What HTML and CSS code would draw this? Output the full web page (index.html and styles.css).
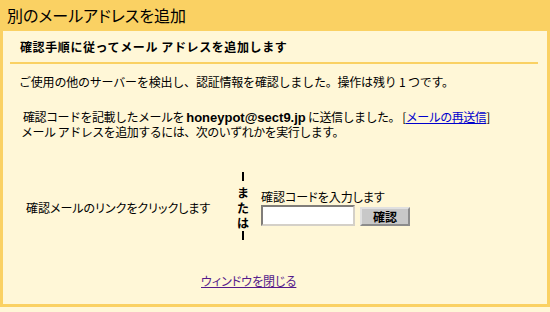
FILE: index.html
```html
<!DOCTYPE html>
<html lang="ja">

<head>
    <meta charset="UTF-8">
    <title>別のメールアドレスを追加</title>
    <link rel="stylesheet" href="styles.css">
</head>

<body>
    <div class="box">
        <div class="title">別のメールアドレスを追加</div>
        <div class="content">
            <div class="subtitle">確認手順に従ってメール アドレスを追加します</div>
            <p class="note">ご使用の他のサーバーを検出し、認証情報を確認しました。操作は残り 1 つです。</p>
            <p class="sent">
                確認コードを記載したメールを <b class="addr">honeypot@sect9.jp</b> に送信しました。 [<a href="#" class="resend">メールの再送信</a>]<br>
                メール アドレスを追加するには、次のいずれかを実行します。
            </p>
            <div class="choices">
                <div class="choice-link">確認メールのリンクをクリックします</div>
                <div class="or">
                    <span class="bar"></span>
                    <span>ま</span>
                    <span>た</span>
                    <span>は</span>
                    <span class="bar"></span>
                </div>
                <div class="choice-code">
                    <div class="code-label">確認コードを入力します</div>
                    <div class="code-row">
                        <input type="text" class="code-input">
                        <button class="code-btn">確認</button>
                    </div>
                </div>
            </div>
            <div class="close-row">
                <a href="#" class="close-link">ウィンドウを閉じる</a>
            </div>
        </div>
    </div>
</body>

</html>
```

FILE: styles.css
```css
body {
    margin: 0;
    background: #fff7d7;
    font-family: "Noto Sans CJK JP", "Liberation Sans", sans-serif;
    font-size: 12px;
    color: #000;
}

.box {
    width: 550px;
    height: 307px;
    box-sizing: border-box;
    border: 3px solid #fad163;
    border-top: none;
}

.title {
    height: 31px;
    line-height: 31px;
    margin: 0 -3px;
    padding-left: 7px;
    background: #fad163;
    font-size: 16px;
    font-feature-settings: "palt";
}

.content {
    padding: 0 9px 0 7px;
}

.subtitle {
    height: 31px;
    line-height: 31px;
    padding-left: 10px;
    border-bottom: 2px solid #fad163;
    font-weight: bold;
    letter-spacing: 0.6px;
}

p {
    margin: 0;
    line-height: 14px;
}

.note {
    margin-top: 11px;
    padding-left: 9px;
    letter-spacing: -0.2px;
}

.sent {
    margin-top: 21px;
    padding-left: 11px;
    text-indent: 2px;
    letter-spacing: -0.5px;
}

.addr {
    font-family: "Liberation Sans", Arial, sans-serif;
    font-size: 13px;
    letter-spacing: 0;
}

.resend {
    color: #0000cc;
}

.choices {
    display: flex;
    align-items: center;
    margin-top: 32px;
}

.choice-link {
    width: 206px;
    padding-left: 16px;
    font-feature-settings: "palt";
}

.or {
    width: 22px;
    display: flex;
    flex-direction: column;
    align-items: center;
    font-size: 12px;
    font-weight: bold;
    line-height: 15px;
}

.bar {
    width: 2px;
    height: 9px;
    margin: 1px 0 4px;
    background: #000;
}

.choice-code {
    margin-left: 7px;
}

.code-label {
    line-height: 14px;
    margin-bottom: 1px;
    font-feature-settings: "palt";
}

.code-row {
    display: flex;
    align-items: flex-end;
    gap: 5px;
}

.code-input {
    width: 94px;
    height: 21px;
    box-sizing: border-box;
    border: 2px inset #d4d0c8;
    background: #fff;
    margin: 0;
    padding: 0;
}

.code-btn {
    width: 50px;
    height: 19px;
    box-sizing: border-box;
    border: 2px outset #e0e0e0;
    background: #c8c8c8;
    font-family: "Noto Sans CJK JP", sans-serif;
    font-size: 12px;
    font-weight: bold;
    line-height: 13px;
    padding: 0;
    margin: 0;
}

.close-row {
    margin-top: 30px;
    padding-left: 191px;
    line-height: 14px;
    font-feature-settings: "palt";
}

.close-link {
    color: #551a8b;
}
```
